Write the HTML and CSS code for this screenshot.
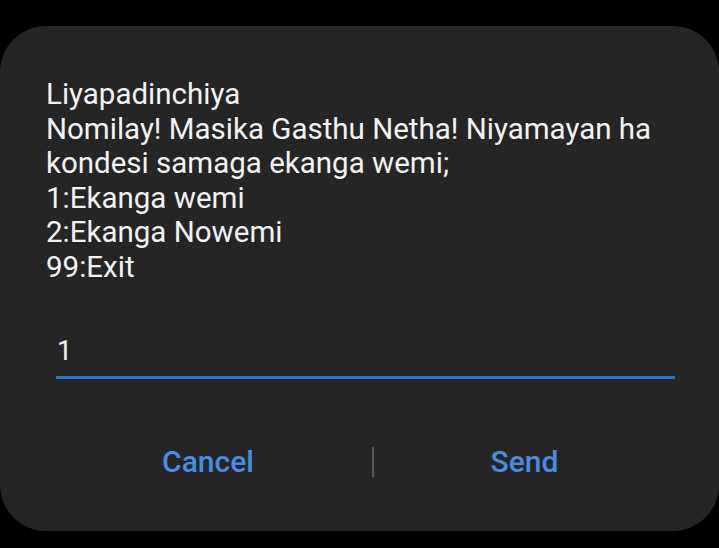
FILE: index.html
```html
<!DOCTYPE html>
<html>
<head>
<meta charset="utf-8">
<link rel="stylesheet" href="styles.css">
</head>
<body>
<div class="dialog">
  <div class="message">
    <div>Liyapadinchiya</div>
    <div>Nomilay! Masika Gasthu Netha! Niyamayan ha kondesi samaga ekanga wemi;</div>
    <div>1:Ekanga wemi</div>
    <div>2:Ekanga Nowemi</div>
    <div>99:Exit</div>
  </div>
  <div class="field">
    <div class="value">1</div>
  </div>
  <div class="actions">
    <div class="btn btn-cancel">Cancel</div>
    <div class="sep"></div>
    <div class="btn btn-send">Send</div>
  </div>
</div>
</body>
</html>
```
FILE: styles.css
```css
html, body {
  margin: 0;
  padding: 0;
  background: #000;
  width: 719px;
  height: 548px;
  overflow: hidden;
}
.dialog {
  margin-top: 26px;
  width: 719px;
  height: 505px;
  box-sizing: border-box;
  background: #252525;
  border-radius: 46px;
  font-family: Roboto, "Liberation Sans", sans-serif;
  color: #f2f2f2;
  padding: 51px 46px 0 46px;
  display: flex;
  flex-direction: column;
}
.message {
  font-size: 29.5px;
  line-height: 34.6px;
  width: 627px;
}
.field {
  margin: 41px -2px 0 10px;
  border-bottom: 3px solid #2a78cc;
  height: 50px;
}
.value {
  font-size: 27px;
  line-height: 50px;
  padding-left: 1px;
}
.actions {
  display: flex;
  align-items: center;
  margin-top: 63px;
  margin-left: -46px;
  margin-right: -46px;
  padding: 0 44px;
}
.btn {
  text-align: center;
  font-size: 30px;
  font-weight: 500;
  color: #4a8ce0;
  line-height: 40px;
}
.btn-cancel {
  width: 328px;
}
.btn-send {
  flex: 1;
}
.sep {
  width: 2px;
  height: 30px;
  background: #555;
}
```
